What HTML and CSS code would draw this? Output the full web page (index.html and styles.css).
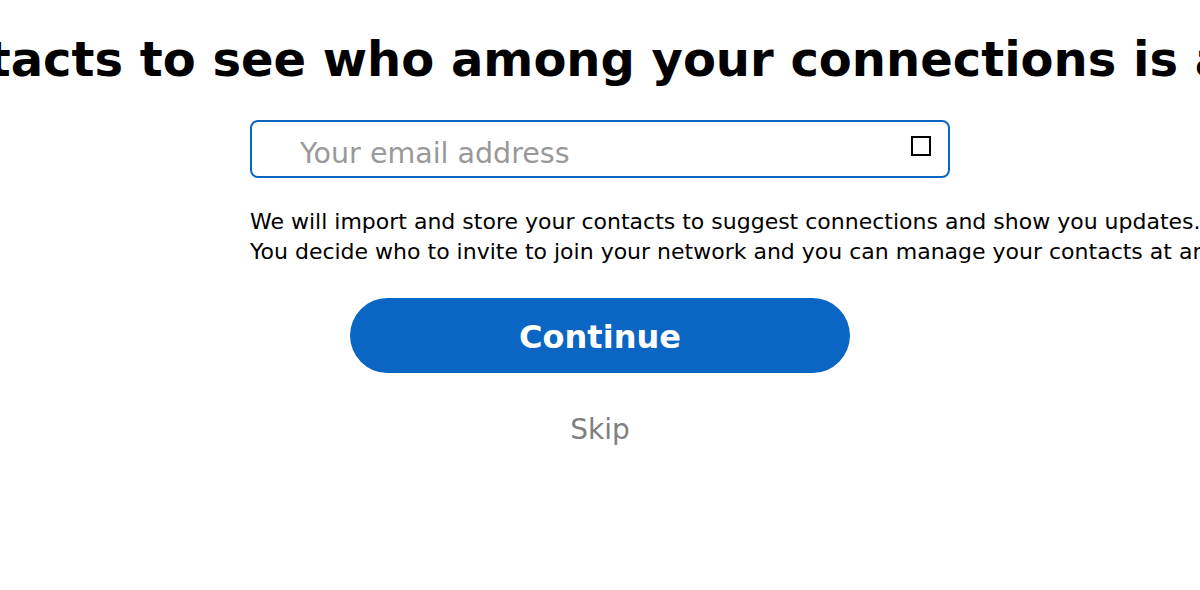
FILE: index.html
```html
<!DOCTYPE html>
<html lang="en">
<head>
<meta charset="utf-8">
<title>Import contacts</title>
<link rel="stylesheet" href="styles.css">
</head>
<body>
<main class="page">
  <h1 class="title"><span class="title-text">Import your contacts to see who among your connections is already on LinkedIn</span></h1>
  <div class="form">
    <div class="field">
      <input class="field-input" type="email" placeholder="Your email address">
      <span class="field-icon"></span>
    </div>
    <p class="note">We will import and store your contacts to suggest connections and show you updates.<br>You decide who to invite to join your network and you can manage your contacts at any time.</p>
    <button class="btn-continue" type="button">Continue</button>
    <button class="btn-skip" type="button">Skip</button>
  </div>
</main>
</body>
</html>
```

FILE: styles.css
```css
html, body {
  margin: 0;
  padding: 0;
  overflow: hidden;
  background: #ffffff;
}

body {
  font-family: "DejaVu Sans", "Liberation Sans", sans-serif;
  color: #000000;
}

.page {
  display: flex;
  flex-direction: column;
  align-items: center;
  padding-top: 31px;
}

.title {
  margin: 0;
  display: flex;
  justify-content: center;
  width: 100%;
  white-space: nowrap;
  font-size: 48px;
  font-weight: 700;
  line-height: normal;
}

.title-text {
  flex: none;
  padding-left: 84px;
}

.form {
  width: 700px;
  margin-top: 33px;
  display: flex;
  flex-direction: column;
}

.field {
  position: relative;
  height: 58px;
}

.field-input {
  box-sizing: border-box;
  width: 100%;
  height: 58px;
  margin: 0;
  border: 2px solid #0a66c2;
  border-radius: 8px;
  padding: 16px 60px 8px 48px;
  font-family: "DejaVu Sans", sans-serif;
  font-size: 28.5px;
  color: #000;
  outline: none;
  background: #fff;
}

.field-input::placeholder {
  color: #999999;
  opacity: 1;
}

.field-icon {
  position: absolute;
  top: 16px;
  right: 19px;
  width: 16px;
  height: 16px;
  border: 2px solid #000;
}

.note {
  margin: 29px 0 0;
  font-size: 22px;
  line-height: 30px;
  white-space: nowrap;
}

.btn-continue {
  align-self: center;
  width: 500px;
  height: 75px;
  margin-top: 31px;
  border: none;
  border-radius: 38px;
  background: #0a66c2;
  color: #ffffff;
  font-family: "DejaVu Sans", sans-serif;
  font-size: 32px;
  font-weight: 700;
  padding: 2px 0 0;
}

.btn-skip {
  align-self: center;
  margin-top: 40px;
  border: none;
  background: none;
  padding: 0;
  font-family: "DejaVu Sans", sans-serif;
  font-size: 28px;
  line-height: normal;
  color: #808080;
}
```
